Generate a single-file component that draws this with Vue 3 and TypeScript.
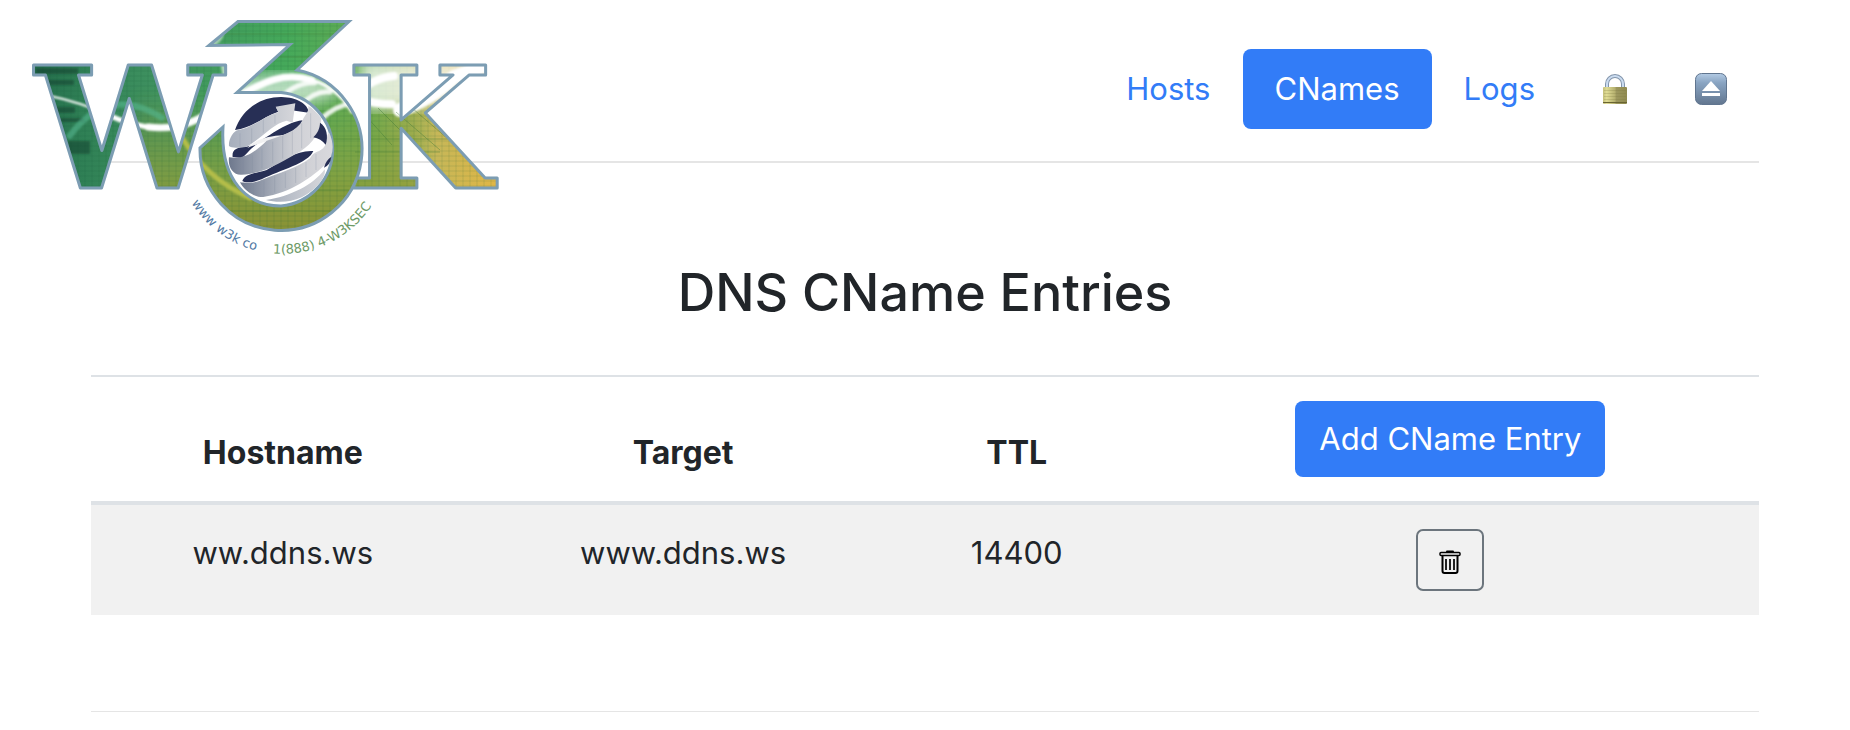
<script setup lang="ts">
import { ref } from 'vue'

interface CNameEntry {
  hostname: string
  target: string
  ttl: number
}

const links = ['Hosts', 'CNames', 'Logs']
const current = ref('CNames')
const entries = ref<CNameEntry[]>([
  { hostname: 'ww.ddns.ws', target: 'www.ddns.ws', ttl: 14400 },
])

function removeEntry(index: number) {
  entries.value.splice(index, 1)
}
</script>

<template>
  <div class="page">
    <header class="header">
      <a class="brand" href="#" aria-label="W3K home">
        <svg class="logo" viewBox="0 0 520 270" role="img" aria-label="W3K">
          <defs>
            <linearGradient id="hue" x1="0" x2="1" y1="0" y2="0">
              <stop offset="0" stop-color="#1c5f46" />
              <stop offset=".16" stop-color="#2f8055" />
              <stop offset=".3" stop-color="#3f9260" />
              <stop offset=".55" stop-color="#45a95a" />
              <stop offset=".72" stop-color="#6aad52" />
              <stop offset=".84" stop-color="#c6b758" />
              <stop offset=".96" stop-color="#e2b644" />
            </linearGradient>
            <linearGradient id="ground" x1="0" x2="0" y1="0" y2="1">
              <stop offset=".38" stop-color="#8c9a34" stop-opacity="0" />
              <stop offset=".72" stop-color="#8f9f3c" stop-opacity=".72" />
              <stop offset="1" stop-color="#8d8d31" />
            </linearGradient>
            <linearGradient id="steel" x1="0" x2="1" y1="0" y2="0">
              <stop offset="0" stop-color="#6e788d" />
              <stop offset=".4" stop-color="#a9afbb" />
              <stop offset=".7" stop-color="#cfd0d5" />
              <stop offset="1" stop-color="#d9d9dd" />
            </linearGradient>
            <linearGradient id="silver" x1="0" x2="1" y1="0" y2="0">
              <stop offset="0" stop-color="#a6aebc" />
              <stop offset="1" stop-color="#d6d7db" />
            </linearGradient>
            <filter id="haze"><feGaussianBlur stdDeviation="7" /></filter>
            <filter id="soft"><feGaussianBlur stdDeviation="1" /></filter>
            <pattern id="weave" width="7" height="5" patternUnits="userSpaceOnUse">
              <path d="M0 1h7M1 0v5" stroke="#0c5430" stroke-opacity=".12" />
            </pattern>
            <pattern id="art" width="520" height="260" patternUnits="userSpaceOnUse">
              <rect width="520" height="260" fill="url(#hue)" />
              <rect x="135" width="285" height="240" fill="url(#ground)" filter="url(#haze)" />
              <rect width="520" height="260" fill="url(#weave)" />
              <g fill="#0a3428" opacity=".45" filter="url(#soft)">
                <rect x="36" y="68" width="42" height="6" />
                <rect x="40" y="80" width="34" height="5" />
                <rect x="50" y="107" width="25" height="6" />
                <rect x="60" y="118" width="24" height="4" />
                <rect x="68" y="141" width="22" height="13" />
              </g>
              <path d="M68 138Q108 82 164 119" fill="none" stroke="#54b78f" stroke-width="6" opacity=".6" filter="url(#soft)" />
              <ellipse cx="280" cy="90" rx="58" ry="16" fill="#fff" opacity=".6" filter="url(#haze)" />
              <path d="M360 60H505L470 94Q420 112 360 108Z" fill="#fff" opacity=".75" filter="url(#haze)" />
              <g fill="none" stroke="#fff" stroke-linecap="round" filter="url(#soft)">
                <path d="M50 96Q80 102 108 115" stroke-width="2" />
                <path d="M106 114Q131 126 157 128" stroke-width="5" />
                <path d="M148 127C190 132 210 111 238 96S284 72 312 80" stroke-width="7" />
                <path d="M312 80Q338 88 352 112" stroke-width="3" />
                <path d="M276 104Q292 82 315 83M300 106Q315 90 330 92M321 119Q337 105 350 104" stroke-width="5" opacity=".85" />
                <path d="M358 94Q372 78 394 76M360 99Q374 104 392 104" stroke-width="8" />
                <path d="M400 110Q430 100 454 77L490 64" stroke-width="14" />
                <path d="M223 66Q224 78 232 88" stroke-width="4" opacity=".6" />
                <path d="M214 44Q222 38 224 25" stroke-width="5" opacity=".5" />
              </g>
              <path d="M181 136C198 164 218 184 252 199" fill="none" stroke="#b4bd49" stroke-width="5" filter="url(#soft)" />
              <g stroke="#397532" stroke-opacity=".4">
                <path d="M366 116L392 145M378 108L420 150M396 112L440 150M412 108L455 145" />
                <path d="M215 34h120M225 57h90M308 139h145M355 152h85M294 190h55M214 211h125" />
              </g>
            </pattern>
            <path id="rim" d="M188 197A107 107 0 0 0 377 197" />
          </defs>

          <g class="letters" fill="url(#art)" stroke="#7c9db3" stroke-width="3" stroke-linejoin="round">
            <text x="35" y="188">W</text>
            <text x="346" y="188">K</text>
          </g>
          <circle cx="281" cy="150" r="62" fill="#fff" />
          <path
            d="M209 45.5L238 21.5H349L297 70A81 81 0 1 1 200 148L223 127C220 180 247 206 281 206A57 57 0 0 0 281 92.500H237L290 44.500Z"
            fill="url(#art)" stroke="#7c9db3" stroke-width="3" stroke-linejoin="miter"
          />

          <g transform="translate(180 80) scale(.3333)">
            <path d="M165 150C185 90 240 50 305 51C350 52 385 72 386 98L345 92L288 82L295 95C250 110 215 145 165 150Z" fill="#272f55" />
            <path d="M158 231C155 210 170 200 200 200C250 190 300 130 368 121C360 150 310 170 260 178C220 190 200 225 185 234Z" fill="#272f55" />
            <path d="M187 303C195 280 230 280 260 270C310 240 350 210 400 213C385 250 300 270 245 298C220 308 195 310 187 303Z" fill="#272f55" />
            <path d="M202 204Q235 168 315 165Q245 188 202 204Z" fill="#f1f1f2" />
            <path d="M147 198C145 178 160 152 175 150C215 145 250 110 295 97L287 80L346 70L338 128L320 122C280 130 245 175 200 200C180 203 155 206 147 198Z" fill="url(#silver)" />
            <path d="M147 232C143 262 160 286 185 284C260 280 310 240 360 215C400 190 425 150 424 115C412 98 398 85 385 78C388 94 375 106 368 120C350 155 310 165 260 182C220 222 190 238 147 232Z" fill="url(#steel)" />
            <path d="M180 307C195 335 225 352 250 351C330 340 400 290 440 250C463 225 462 190 448 158C440 160 441 185 435 197C420 220 402 210 390 235C350 265 300 278 245 300C220 312 195 308 180 307Z" fill="url(#steel)" />
            <path d="M420 128C440 140 446 170 437 194C428 182 415 175 400 172C412 160 420 145 420 128Z" fill="#272f55" />
            <path d="M454 230Q451 255 432 263Q438 240 454 230Z" fill="#272f55" />
            <path d="M258 360C330 350 400 315 434 268C440 290 410 330 365 352C330 368 290 368 258 360Z" fill="url(#silver)" />
            <path d="M180 160v40M215 145v45M250 118v40M285 105v26M190 236v44M217 226v52M246 205v60M278 185v65M308 168v68M337 155v68M365 130v75M392 100v75M220 310v36M252 302v44M284 290v48M316 278v46M347 264v45M378 246v45M408 222v48" stroke="#7f899d" stroke-opacity=".25" stroke-width="3" />
          </g>

          <g class="motto">
            <text fill="#5279a4"><textPath href="#rim" startOffset="7">www w3k co</textPath></text>
            <text fill="#6d9a66"><textPath href="#rim" startOffset="106">1(888) 4-W3KSEC</textPath></text>
          </g>
        </svg>
      </a>

      <nav class="nav" aria-label="Main">
        <a
          v-for="link in links"
          :key="link"
          href="#"
          class="nav-link"
          :class="{ active: link === current }"
          @click.prevent="current = link"
        >{{ link }}</a>
        <a href="#" class="nav-link" aria-label="Change password">
          <svg class="nav-icon" viewBox="0 0 32 32">
            <defs>
              <linearGradient id="brass" x1="0" x2="1" y1="0" y2="0">
                <stop offset="0" stop-color="#c4bf7a" />
                <stop offset=".15" stop-color="#e0dc94" />
                <stop offset=".5" stop-color="#b5b06f" />
                <stop offset=".55" stop-color="#9d985f" />
                <stop offset="1" stop-color="#8f8a50" />
              </linearGradient>
            </defs>
            <path d="M8 15V11a8 8 0 0 1 16 0v4" fill="none" stroke="#8395ab" stroke-width="4" />
            <path d="M8 15V11a8 8 0 0 1 16 0v4" fill="none" stroke="#cbdcf0" stroke-width="2" />
            <rect x="4" y="14" width="24" height="17" rx="1" fill="url(#brass)" />
            <path d="M5 17.500h22M5 20.500h22M5 23.500h22M5 26.500h22" stroke="#7c773f" stroke-opacity=".25" />
            <path d="M4 29.500h24" stroke="#696431" stroke-width="1" />
          </svg>
        </a>
        <a href="#" class="nav-link" aria-label="Log out">
          <svg class="nav-icon" viewBox="0 0 32 32">
            <defs>
              <linearGradient id="key" x1="0" x2="0" y1="0" y2="1">
                <stop offset="0" stop-color="#b3cbe4" />
                <stop offset=".3" stop-color="#89a4c2" />
                <stop offset="1" stop-color="#62768f" />
              </linearGradient>
            </defs>
            <rect x=".5" y=".5" width="31" height="31" rx="6" fill="url(#key)" stroke="#60758f" />
            <path d="M16 8L25 18H7Z" fill="#fff" />
            <rect x="7" y="20" width="18" height="3" fill="#fff" />
          </svg>
        </a>
      </nav>
    </header>

    <main>
      <h1 class="title">DNS CName Entries</h1>
      <table class="table">
        <colgroup>
          <col class="col-host" />
          <col class="col-target" />
          <col class="col-ttl" />
          <col />
        </colgroup>
        <thead>
          <tr>
            <th scope="col">Hostname</th>
            <th scope="col">Target</th>
            <th scope="col">TTL</th>
            <th scope="col"><button type="button" class="btn-add">Add CName Entry</button></th>
          </tr>
        </thead>
        <tbody>
          <tr v-for="(entry, i) in entries" :key="entry.hostname">
            <td>{{ entry.hostname }}</td>
            <td>{{ entry.target }}</td>
            <td>{{ entry.ttl }}</td>
            <td>
              <button type="button" class="btn-delete" aria-label="Delete entry" @click="removeEntry(i)">
                <svg viewBox="0 0 22 24" fill="none" stroke="#000">
                  <path d="M8 1.500h6" stroke-width="2" stroke-linecap="round" />
                  <rect x="1" y="2.500" width="20" height="3" rx="1" stroke-width="1.500" />
                  <path d="M3.500 6V21a2 2 0 0 0 2 2h11a2 2 0 0 0 2-2V6" stroke-width="2" />
                  <path d="M7 9v11M11 9v11M15 9v11" stroke-width="2" stroke="#222" />
                </svg>
              </button>
            </td>
          </tr>
        </tbody>
      </table>
    </main>
    <hr class="rule" />
  </div>
</template>

<style>
body {
  margin: 0;
  background: #fff;
}
</style>

<style scoped>
.page {
  padding: 0 91px;
  color: #212529;
  font: 400 31px/48px Inter, "Liberation Sans", sans-serif;
}
.header {
  position: relative;
  display: flex;
  justify-content: flex-end;
  padding: 49px 0 32px;
  border-bottom: 2px solid #e5e5e5;
}
.brand {
  position: absolute;
  top: 0;
  left: -91px;
}
.logo {
  display: block;
  width: 520px;
  height: 270px;
}
.letters {
  font: 700 168px "DejaVu Serif", serif;
}
.motto {
  font: 400 13px "DejaVu Sans", sans-serif;
}
.nav {
  display: flex;
}
.nav-link {
  display: flex;
  align-items: center;
  padding: 16px 32px;
  border-radius: 8px;
  color: #327cf7;
  text-decoration: none;
}
.nav-link.active {
  background: #327cf7;
  color: #fff;
}
.nav-icon {
  width: 32px;
  height: 32px;
}
.title {
  margin: 96px 0 48px;
  font-size: 52px;
  font-weight: 500;
  line-height: 68px;
  text-align: center;
}
.table {
  width: 100%;
  table-layout: fixed;
  border-collapse: separate;
  border-spacing: 0;
  border-top: 2px solid #dee2e6;
  text-align: center;
}
.col-host {
  width: 23%;
}
.col-target {
  width: 25%;
}
.col-ttl {
  width: 15%;
}
th,
td {
  padding: 24px;
}
th {
  border-bottom: 4px solid #dee2e6;
  font-size: 32px;
  font-weight: 700;
  vertical-align: bottom;
}
td {
  vertical-align: top;
  background: #f1f1f1;
}
.btn-add {
  display: block;
  margin: 0 auto;
  padding: 14px 24px;
  border: 0;
  border-radius: 8px;
  background: #327cf7;
  color: #fff;
  font: inherit;
  font-size: 31px;
  font-weight: 400;
  white-space: nowrap;
}
.btn-delete {
  display: grid;
  place-items: center;
  width: 68px;
  height: 62px;
  margin: 0 auto;
  padding: 4px 0 0;
  border: 2px solid #6c757d;
  border-radius: 7px;
  background: transparent;
}
.btn-delete svg {
  width: 22px;
  height: 24px;
}
.rule {
  margin: 96px 0 0;
  border: 0;
  border-top: 1px solid #e5e5e5;
}
</style>
